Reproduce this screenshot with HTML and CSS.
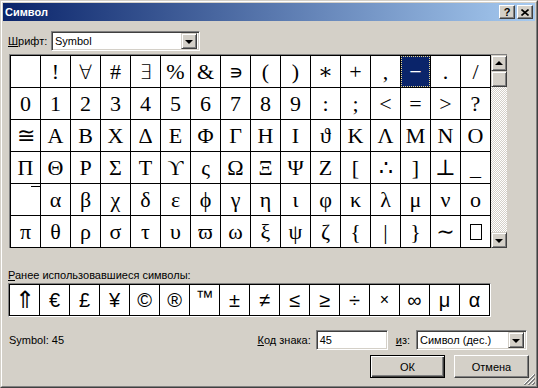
FILE: index.html
```html
<!DOCTYPE html>
<html lang="ru">
<head>
    <meta charset="UTF-8">
    <title>Символ</title>
    <link rel="stylesheet" href="styles.css">
</head>
<body>
    <div class="window">
        <div class="frame">
            <div class="caption">
                <span class="caption-title">Символ</span>
                <div class="caption-buttons">
                    <div class="cap-btn help">?</div>
                    <div class="cap-btn">
                        <svg width="8" height="7" viewBox="0 0 8 7"><path d="M0.5 0.5 L7.5 6.5 M7.5 0.5 L0.5 6.5" stroke="#000" stroke-width="1.6"/></svg>
                    </div>
                </div>
            </div>

            <div class="content">
                <div class="font-row">
                    <span class="label"><u>Ш</u>рифт:</span>
                    <div class="combo font-combo">
                        <span class="combo-text">Symbol</span>
                        <div class="drop-btn"><span class="arrow-down"></span></div>
                    </div>
                </div>

                <div class="chart">
                    <div class="symbol-grid">
                        <div class="cell"></div><div class="cell">!</div><div class="cell math">∀</div><div class="cell">#</div>
                        <div class="cell math">∃</div><div class="cell">%</div><div class="cell">&amp;</div><div class="cell math">∍</div>
                        <div class="cell">(</div><div class="cell">)</div><div class="cell">∗</div><div class="cell">+</div>
                        <div class="cell">,</div><div class="cell sel">−</div><div class="cell">.</div><div class="cell">/</div>

                        <div class="cell">0</div><div class="cell">1</div><div class="cell">2</div><div class="cell">3</div>
                        <div class="cell">4</div><div class="cell">5</div><div class="cell">6</div><div class="cell">7</div>
                        <div class="cell">8</div><div class="cell">9</div><div class="cell">:</div><div class="cell">;</div>
                        <div class="cell">&lt;</div><div class="cell">=</div><div class="cell">&gt;</div><div class="cell">?</div>

                        <div class="cell">≅</div><div class="cell">Α</div><div class="cell">Β</div><div class="cell">Χ</div>
                        <div class="cell">Δ</div><div class="cell">Ε</div><div class="cell">Φ</div><div class="cell">Γ</div>
                        <div class="cell">Η</div><div class="cell">Ι</div><div class="cell">ϑ</div><div class="cell">Κ</div>
                        <div class="cell">Λ</div><div class="cell">Μ</div><div class="cell">Ν</div><div class="cell">Ο</div>

                        <div class="cell">Π</div><div class="cell">Θ</div><div class="cell">Ρ</div><div class="cell">Σ</div>
                        <div class="cell">Τ</div><div class="cell">ϒ</div><div class="cell">ς</div><div class="cell">Ω</div>
                        <div class="cell">Ξ</div><div class="cell">Ψ</div><div class="cell">Ζ</div><div class="cell">[</div>
                        <div class="cell">∴</div><div class="cell">]</div><div class="cell">⊥</div><div class="cell">_</div>

                        <div class="cell ext"><span class="ext-bar"></span></div><div class="cell">α</div><div class="cell">β</div><div class="cell">χ</div>
                        <div class="cell">δ</div><div class="cell">ε</div><div class="cell">ϕ</div><div class="cell">γ</div>
                        <div class="cell">η</div><div class="cell">ι</div><div class="cell">φ</div><div class="cell">κ</div>
                        <div class="cell">λ</div><div class="cell">μ</div><div class="cell">ν</div><div class="cell">ο</div>

                        <div class="cell">π</div><div class="cell">θ</div><div class="cell">ρ</div><div class="cell">σ</div>
                        <div class="cell">τ</div><div class="cell">υ</div><div class="cell">ϖ</div><div class="cell">ω</div>
                        <div class="cell">ξ</div><div class="cell">ψ</div><div class="cell">ζ</div><div class="cell">{</div>
                        <div class="cell">|</div><div class="cell">}</div><div class="cell">∼</div><div class="cell"><span class="empty-box"></span></div>
                    </div>

                    <div class="scrollbar">
                        <div class="sb-btn"><span class="arrow-up"></span></div>
                        <div class="sb-btn"></div>
                        <div class="sb-track"></div>
                        <div class="sb-btn"><span class="arrow-down"></span></div>
                    </div>
                </div>

                <div class="recent-label"><u>Р</u>анее использовавшиеся символы:</div>
                <div class="recent">
                    <div class="recent-grid">
                        <div class="rcell arrow-sym">⇑</div><div class="rcell">€</div><div class="rcell">£</div><div class="rcell">¥</div>
                        <div class="rcell">©</div><div class="rcell">®</div><div class="rcell tm">™</div><div class="rcell">±</div>
                        <div class="rcell">≠</div><div class="rcell">≤</div><div class="rcell">≥</div><div class="rcell">÷</div>
                        <div class="rcell small">×</div><div class="rcell">∞</div><div class="rcell">μ</div><div class="rcell">α</div>
                    </div>
                </div>

                <div class="code-row">
                    <span class="status">Symbol: 45</span>
                    <span class="label code-label"><u>К</u>од знака:</span>
                    <div class="field code-field">45</div>
                    <span class="label from-label"><u>и</u>з:</span>
                    <div class="combo from-combo">
                        <span class="combo-text">Символ (дес.)</span>
                        <div class="drop-btn"><span class="arrow-down"></span></div>
                    </div>
                </div>

                <div class="button-row">
                    <div class="button default">ОК</div>
                    <div class="button">Отмена</div>
                </div>
            </div>

            <svg class="grip" width="12" height="12" viewBox="0 0 12 12">
                <path d="M11 1 L1 11 M11 5 L5 11 M11 9 L9 11" stroke="#fff" stroke-width="1"/>
                <path d="M12 1 L1 12 M12 2 L2 12 M12 5 L5 12 M12 6 L6 12 M12 9 L9 12 M12 10 L10 12" stroke="#808080" stroke-width="1"/>
            </svg>
        </div>
    </div>
</body>
</html>
```

FILE: styles.css
```css
* {
    margin: 0;
    padding: 0;
    box-sizing: border-box;
}

html, body {
    width: 538px;
    height: 388px;
    overflow: hidden;
}

body {
    background-color: #d4d0c8;
    font-family: "Liberation Sans", Arial, sans-serif;
    font-size: 11px;
    color: #000;
}

.window {
    width: 538px;
    height: 388px;
    border: 1px solid;
    border-color: #d4d0c8 #404040 #404040 #d4d0c8;
}

.frame {
    position: relative;
    height: 100%;
    border: 1px solid;
    border-color: #fff #808080 #808080 #fff;
    padding: 1px;
}

/* title bar */
.caption {
    height: 18px;
    display: flex;
    align-items: center;
    justify-content: space-between;
    padding-left: 2px;
    background: linear-gradient(to right, #0a246a, #a6caf0);
}

.caption-title {
    color: #fff;
    font-weight: bold;
    font-size: 11px;
}

.caption-buttons {
    display: flex;
    gap: 2px;
    padding-right: 2px;
}

.cap-btn {
    width: 16px;
    height: 14px;
    display: flex;
    justify-content: center;
    align-items: center;
    background-color: #d4d0c8;
    border: 1px solid;
    border-color: #fff #404040 #404040 #fff;
    box-shadow: inset -1px -1px #808080;
}

.cap-btn.help {
    font-weight: bold;
    font-size: 11px;
    line-height: 1;
}

/* dialog body */
.content {
    padding: 10px 0 0 5px;
}

.font-row {
    display: flex;
    align-items: center;
    height: 20px;
}

.font-row .label {
    width: 43px;
}

.combo, .field {
    height: 20px;
    background-color: #fff;
    border: 1px solid;
    border-color: #808080 #fff #fff #808080;
    box-shadow: inset 1px 1px #404040, inset -1px -1px #d4d0c8;
    display: flex;
    align-items: center;
    padding: 2px;
}

.combo-text {
    flex: 1;
    padding-left: 1px;
}

.font-combo {
    width: 149px;
}

.drop-btn {
    width: 16px;
    height: 16px;
    display: flex;
    justify-content: center;
    align-items: center;
    background-color: #d4d0c8;
    border: 1px solid;
    border-color: #d4d0c8 #404040 #404040 #d4d0c8;
    box-shadow: inset 1px 1px #fff, inset -1px -1px #808080;
}

.arrow-down {
    width: 0;
    height: 0;
    border-left: 4px solid transparent;
    border-right: 4px solid transparent;
    border-top: 4px solid #000;
    margin-top: 1px;
}

.arrow-up {
    width: 0;
    height: 0;
    border-left: 4px solid transparent;
    border-right: 4px solid transparent;
    border-bottom: 4px solid #000;
    margin-bottom: 1px;
}

/* symbol table */
.chart {
    display: flex;
    margin-top: 3px;
    margin-left: 1px;
    width: fit-content;
    border-top: 1px solid #808080;
    border-left: 1px solid #808080;
}

.symbol-grid {
    display: grid;
    grid-template-columns: repeat(16, 29px);
    grid-template-rows: repeat(6, 31px);
    gap: 1px;
    padding: 1px;
    background-color: #000;
}

.cell {
    background-color: #fff;
    display: flex;
    justify-content: center;
    align-items: center;
    font-family: "Liberation Serif", "DejaVu Serif", serif;
    font-size: 22px;
    line-height: 1;
}

.cell.math {
    font-family: "DejaVu Sans", sans-serif;
    font-weight: 200;
    font-size: 20px;
}

.cell.sel {
    background-color: #0a246a;
    color: #fff;
    outline: 1px dotted #e8d890;
    outline-offset: -1px;
}

.cell.ext {
    justify-content: flex-end;
    align-items: flex-start;
}

.ext-bar {
    width: 9px;
    height: 1px;
    margin-top: 2px;
    background-color: #000;
}

.empty-box {
    width: 12px;
    height: 16px;
    border: 1px solid #000;
}

.scrollbar {
    width: 16px;
    display: flex;
    flex-direction: column;
}

.sb-btn {
    width: 16px;
    height: 16px;
    flex: none;
    display: flex;
    justify-content: center;
    align-items: center;
    background-color: #d4d0c8;
    border: 1px solid;
    border-color: #d4d0c8 #404040 #404040 #d4d0c8;
    box-shadow: inset 1px 1px #fff, inset -1px -1px #808080;
}

.sb-track {
    flex: 1;
    background-color: #fff;
    background-image: repeating-conic-gradient(#d4d0c8 0 25%, #fff 0 50%);
    background-size: 2px 2px;
}

/* recently used */
.recent-label {
    margin-top: 21px;
    line-height: 13px;
}

.recent {
    margin-top: 1px;
    width: fit-content;
    border: 1px solid;
    border-color: #808080 #fff #fff #808080;
}

.recent-grid {
    display: grid;
    grid-template-columns: repeat(16, 29px);
    grid-template-rows: 30px;
    gap: 1px;
    padding: 1px;
    background-color: #000;
}

.rcell {
    background-color: #fff;
    display: flex;
    justify-content: center;
    align-items: center;
    font-family: "Liberation Sans", "DejaVu Sans", sans-serif;
    font-size: 20px;
    line-height: 1;
}

.rcell.arrow-sym {
    font-family: "DejaVu Sans", sans-serif;
    font-weight: 200;
    font-size: 24px;
}

.rcell.tm {
    align-items: flex-start;
    padding-top: 3px;
    font-size: 18px;
}

.rcell.small {
    font-size: 16px;
}

/* code + buttons */
.code-row {
    display: flex;
    align-items: center;
    height: 20px;
    margin-top: 13px;
    padding-right: 8px;
}

.status {
    flex: 1;
    padding-left: 1px;
}

.code-label {
    margin-right: 5px;
}

.code-field {
    width: 72px;
    padding-left: 3px;
}

.from-label {
    margin: 0 6px 0 8px;
}

.from-combo {
    width: 111px;
}

.button-row {
    display: flex;
    justify-content: flex-end;
    gap: 9px;
    margin-top: 5px;
    padding-right: 6px;
}

.button {
    width: 75px;
    height: 23px;
    display: flex;
    justify-content: center;
    align-items: center;
    background-color: #d4d0c8;
    border: 1px solid;
    border-color: #fff #404040 #404040 #fff;
    box-shadow: inset -1px -1px #808080;
}

.button.default {
    border-color: #000;
    box-shadow: inset 1px 1px #fff, inset -1px -1px #404040, inset -2px -2px #808080;
}

.grip {
    position: absolute;
    right: 1px;
    bottom: 1px;
}
```
